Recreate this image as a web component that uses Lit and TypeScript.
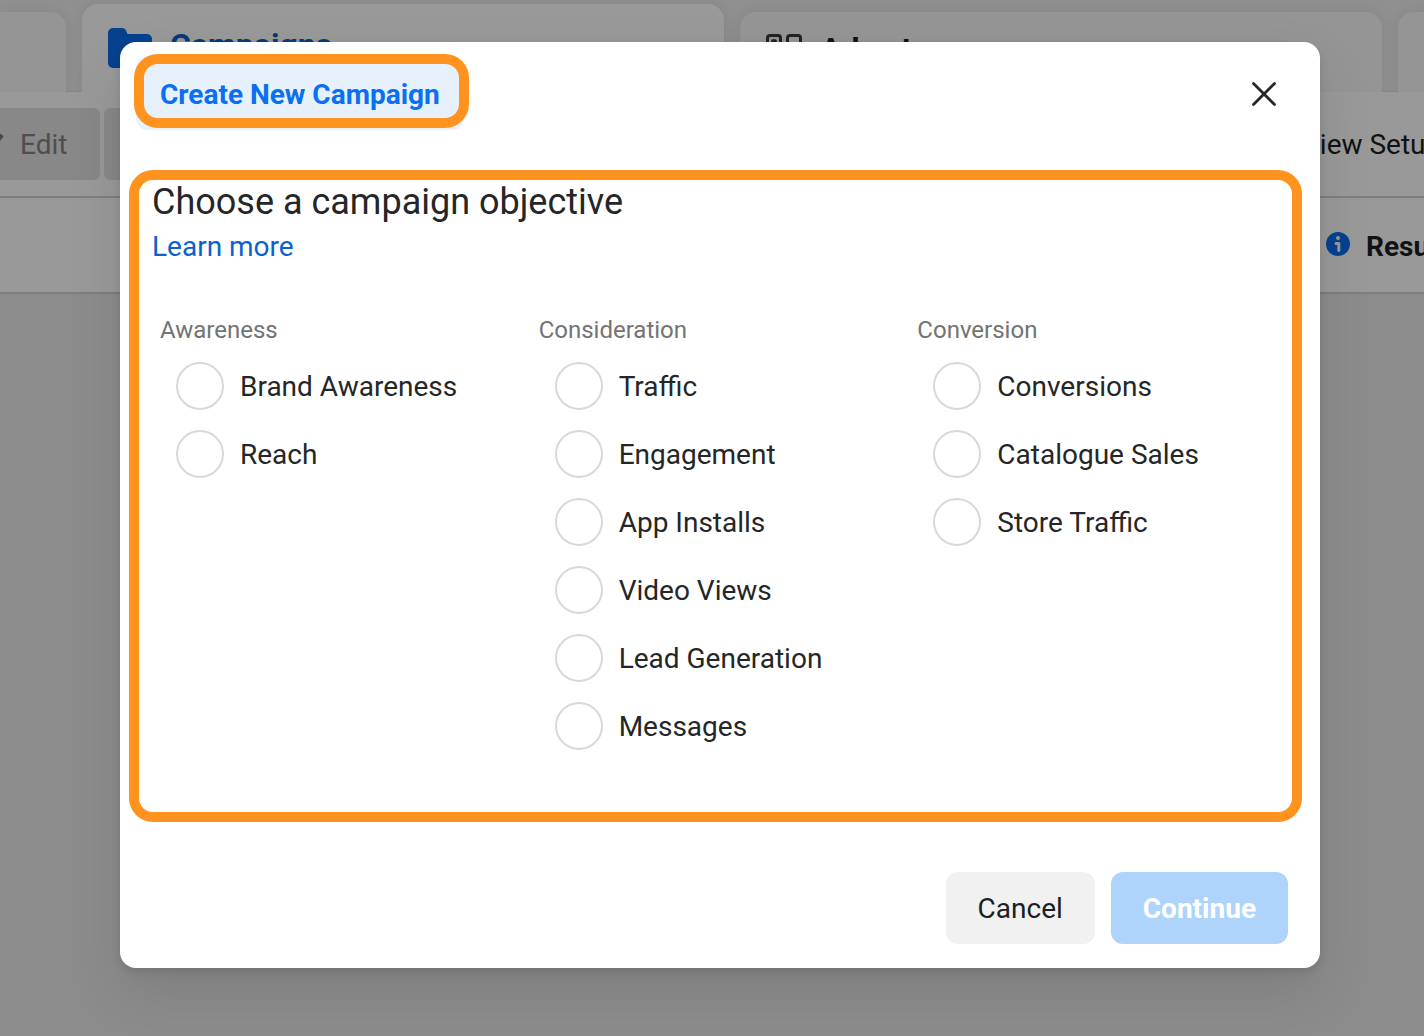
import { LitElement, html, css } from "lit";
import { customElement, state } from "lit/decorators.js";

interface ObjectiveGroup {
  title: string;
  items: string[];
}

const GROUPS: ObjectiveGroup[] = [
  { title: "Awareness", items: ["Brand Awareness", "Reach"] },
  {
    title: "Consideration",
    items: ["Traffic", "Engagement", "App Installs", "Video Views", "Lead Generation", "Messages"],
  },
  { title: "Conversion", items: ["Conversions", "Catalogue Sales", "Store Traffic"] },
];

// The ads manager page that stays dimmed behind the dialog.
@customElement("ads-backdrop")
class AdsBackdrop extends LitElement {
  static styles = css`
    :host {
      display: block;
      min-width: 0;
      overflow: hidden;
      background: #e9e9e9;
      color: #1c1e21;
      font-family: Roboto, "Liberation Sans", sans-serif;
      font-size: 28px;
      line-height: 36px;
      white-space: nowrap;
    }
    .tabs {
      display: grid;
      grid-template-columns: 66px 1fr 1fr 26px;
      column-gap: 16px;
      align-items: end;
      height: 92px;
      background: #f0f0f0;
    }
    .tab {
      display: flex;
      align-items: center;
      gap: 18px;
      box-sizing: border-box;
      height: 80px;
      padding: 0 26px;
      border-radius: 16px 16px 0 0;
      background: #f8f8f8;
      box-shadow: 0 0 16px rgba(0, 0, 0, 0.08);
      clip-path: inset(-20px -20px 0);
      font-size: 32px;
      font-weight: 700;
    }
    .tab span {
      padding-bottom: 6px;
    }
    .tab.first {
      border-radius: 0 16px 0 0;
    }
    .tab.last {
      border-radius: 16px 0 0 0;
    }
    .tab.active {
      z-index: 1;
      height: 88px;
      background: #ffffff;
      color: #0a62cc;
    }
    .tab svg {
      flex: none;
    }
    .toolbar {
      display: flex;
      justify-content: space-between;
      align-items: center;
      box-sizing: border-box;
      height: 106px;
      border-bottom: 2px solid #d0d0d0;
      background: #ffffff;
      box-shadow: 0 0 2px rgba(0, 0, 0, 0.2);
    }
    .actions {
      display: flex;
      gap: 4px;
      margin-left: -40px;
    }
    button {
      display: flex;
      align-items: center;
      gap: 16px;
      height: 72px;
      padding: 2px 33px 0 16px;
      border: 0;
      border-radius: 6px;
      background: #e3e3e3;
      color: #838383;
      font: inherit;
    }
    .setup {
      width: 122px;
      padding-top: 2px;
    }
    .heads {
      display: flex;
      justify-content: flex-end;
      align-items: center;
      box-sizing: border-box;
      height: 96px;
      padding-bottom: 2px;
      border-bottom: 2px solid #d0d0d0;
      background: #ffffff;
    }
    .result {
      display: flex;
      align-items: center;
      gap: 16px;
      width: 98px;
      font-weight: 700;
    }
    .result span {
      padding-top: 6px;
    }
    .result svg {
      flex: none;
    }
  `;

  render() {
    return html`
      <div class="tabs">
        <div class="tab first"></div>
        <div class="tab active">
          <svg width="44" height="40" viewBox="0 0 44 40">
            <path
              fill="#0a6ff0"
              d="M5 0h9c2 0 3.400 1 4.200 2.800L19.500 6H39a5 5 0 0 1 5 5v24a5 5 0 0 1-5 5H5a5 5 0 0 1-5-5V5a5 5 0 0 1 5-5z"
            />
          </svg>
          <span>Campaigns</span>
        </div>
        <div class="tab">
          <svg width="36" height="36" viewBox="0 0 36 36" fill="none" stroke="#3a3b3c" stroke-width="3">
            <rect x="1.500" y="1.500" width="13" height="13" rx="2.500" />
            <rect x="21.500" y="1.500" width="13" height="13" rx="2.500" />
            <rect x="1.500" y="21.500" width="13" height="13" rx="2.500" />
            <rect x="21.500" y="21.500" width="13" height="13" rx="2.500" />
            <circle cx="8" cy="8" r="3" fill="#3a3b3c" stroke="none" />
          </svg>
          <span>Ad sets</span>
        </div>
        <div class="tab last"></div>
      </div>
      <div class="toolbar">
        <div class="actions">
          <button type="button">
            <svg width="28" height="36" viewBox="0 0 28 36" fill="#7a7a7a">
              <path d="M1 31l1-7L17 9l6 6L8 30z" />
              <path d="M18 8l2-2c1-1 2-1 3 0l3.500 2c1.200 1 1.200 2 0 3l-2.500 3z" />
            </svg>
            <span>Edit</span>
          </button>
          <button type="button">A/B Test</button>
        </div>
        <div class="setup">View Setup</div>
      </div>
      <div class="heads">
        <div class="result">
          <svg width="24" height="24" viewBox="0 0 24 24">
            <circle cx="12" cy="12" r="12" fill="#0a6ff0" />
            <circle cx="12" cy="6" r="2" fill="#ffffff" />
            <path d="M10 11.500h2.800V18.500" fill="none" stroke="#ffffff" stroke-width="3" stroke-linecap="round" stroke-linejoin="round" />
          </svg>
          <span>Results</span>
        </div>
      </div>
    `;
  }
}

@customElement("campaign-dialog")
class CampaignDialog extends LitElement {
  static styles = css`
    :host {
      display: block;
      border-radius: 16px;
      background: #ffffff;
      box-shadow: 0 24px 56px rgba(0, 0, 0, 0.1), 0 4px 8px rgba(0, 0, 0, 0.1);
      color: #252627;
      font-family: Roboto, "Liberation Sans", sans-serif;
      font-size: 28px;
      line-height: 38px;
    }
    header {
      display: flex;
      justify-content: space-between;
      align-items: flex-start;
      padding: 14px 32px 40px 16px;
    }
    .chip {
      position: relative;
      margin: 0;
      padding: 20px 24px 16px;
      border-radius: 12px;
      background: #e7f1fe;
      color: #0a6ff0;
      font-size: 28px;
      line-height: 38px;
      font-weight: 700;
    }
    .chip::after {
      content: "";
      position: absolute;
      inset: -2px -5px 2px -2px;
      border: 10px solid #ff931e;
      border-radius: 24px;
    }
    .close {
      display: grid;
      place-items: center;
      width: 48px;
      height: 48px;
      margin-top: 14px;
      padding: 0;
      border: 0;
      background: none;
    }
    .body {
      margin: 0 18px 0 9px;
      padding: 0 12px 62px 13px;
      border: 10px solid #ff931e;
      border-radius: 24px;
    }
    h2 {
      margin: 0 0 4px;
      font-size: 36px;
      line-height: 44px;
      font-weight: 400;
    }
    a {
      color: #0a62cc;
      text-decoration: none;
    }
    .groups {
      display: grid;
      grid-template-columns: repeat(3, 1fr);
      column-gap: 16px;
      margin-top: 48px;
      padding-left: 8px;
    }
    fieldset {
      min-width: 0;
      margin: 0;
      padding: 0;
      border: 0;
    }
    legend {
      padding: 0;
      color: #737373;
      font-size: 24px;
      line-height: 32px;
    }
    .list {
      display: flex;
      flex-direction: column;
      gap: 20px;
      padding: 16px 0 0 16px;
    }
    label {
      display: flex;
      align-items: center;
      gap: 16px;
    }
    label span {
      padding-top: 2px;
    }
    input {
      appearance: none;
      flex: none;
      box-sizing: border-box;
      width: 48px;
      height: 48px;
      margin: 0;
      border: 2px solid #d9d9d9;
      border-radius: 50%;
      background: #ffffff;
    }
    input:checked {
      border: 14px solid #0a6ff0;
    }
    footer {
      display: flex;
      justify-content: flex-end;
      gap: 16px;
      padding: 50px 32px 24px;
    }
    .btn {
      height: 72px;
      padding: 2px 32px 0;
      border: 0;
      border-radius: 12px;
      background: #f1f1f1;
      color: #1c1e21;
      font: inherit;
    }
    .btn.primary {
      background: #0a6ff0;
      color: #ffffff;
      font-weight: 700;
    }
    .btn.primary:disabled {
      background: #afd4fc;
    }
  `;

  @state() private selected = "";

  render() {
    return html`
      <header>
        <h1 class="chip">Create New Campaign</h1>
        <button class="close" type="button" aria-label="Close">
          <svg width="24" height="24" viewBox="0 0 24 24" fill="none" stroke="#252627" stroke-width="2.800" stroke-linecap="round">
            <path d="M1.500 1.500l21 21M22.500 1.500l-21 21" />
          </svg>
        </button>
      </header>
      <section class="body">
        <h2>Choose a campaign objective</h2>
        <a href="#learn">Learn more</a>
        <div class="groups">
          ${GROUPS.map(
            (group) => html`
              <fieldset>
                <legend>${group.title}</legend>
                <div class="list">
                  ${group.items.map(
                    (item) => html`
                      <label>
                        <input
                          type="radio"
                          name="objective"
                          .value=${item}
                          .checked=${this.selected === item}
                          @change=${() => (this.selected = item)}
                        />
                        <span>${item}</span>
                      </label>
                    `,
                  )}
                </div>
              </fieldset>
            `,
          )}
        </div>
      </section>
      <footer>
        <button class="btn" type="button">Cancel</button>
        <button class="btn primary" type="button" ?disabled=${!this.selected}>Continue</button>
      </footer>
    `;
  }
}

@customElement("app-root")
class AppRoot extends LitElement {
  static styles = css`
    :host {
      display: grid;
      grid-template-columns: minmax(0, 1fr);
      min-height: 100vh;
    }
    .page,
    .scrim {
      grid-area: 1 / 1;
    }
    .scrim {
      z-index: 1;
      padding: 42px 104px 42px 120px;
      background: rgba(0, 0, 0, 0.4);
    }
  `;

  render() {
    return html`
      <ads-backdrop class="page" inert></ads-backdrop>
      <div class="scrim">
        <campaign-dialog role="dialog" aria-modal="true" aria-label="Create New Campaign"></campaign-dialog>
      </div>
    `;
  }
}
